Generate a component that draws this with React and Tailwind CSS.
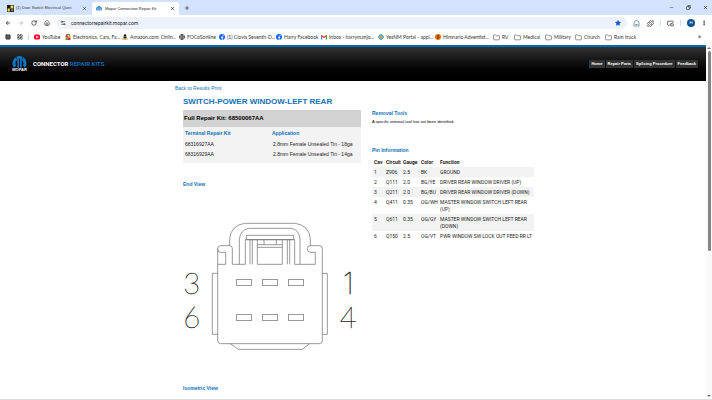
import React from 'react';
import {
    ArrowLeft, ArrowRight, RotateCw, House, Settings2, Star, Puzzle, EllipsisVertical,
    Folder, LayoutGrid, Minus, Copy, X, Plus, Globe, PictureInPicture2, Square,
} from 'lucide-react';

const bookmarks = [
    { label: 'YouTube', icon: 'youtube', width: 'w-[31px]' },
    { label: 'Electronics, Cars, Fa...', icon: 'ebay', width: 'w-[57px]' },
    { label: 'Amazon.com: Onlin...', icon: 'amazon', width: 'w-[57px]' },
    { label: 'FOCoSonline', icon: 'globe', width: 'w-[40px]' },
    { label: '(1) Clovis Seventh-D...', icon: 'facebook', width: 'w-[57px]' },
    { label: 'Harry Facebook', icon: 'facebook', width: 'w-[45px]' },
    { label: 'Inbox - harrymanjo...', icon: 'gmail', width: 'w-[57px]' },
    { label: 'YesNM Portal - appl...', icon: 'portal', width: 'w-[57px]' },
    { label: 'Himnario Adventist...', icon: 'himnario', width: 'w-[58px]' },
    { label: 'RV', icon: 'folder', width: 'w-[21px]' },
    { label: 'Medical', icon: 'folder', width: 'w-[31px]' },
    { label: 'Military', icon: 'folder', width: 'w-[30px]' },
    { label: 'Church', icon: 'folder', width: 'w-[30px]' },
    { label: 'Ram truck', icon: 'folder', width: 'w-[34px]' },
];

const kits = [
    { part: '68316927AA', application: '2.8mm Female Unsealed Tin - 18ga' },
    { part: '68316929AA', application: '2.8mm Female Unsealed Tin - 14ga' },
];

const pins = [
    { cav: 1, circuit: 'Z906', gauge: '2.5', color: 'BK', fn: 'GROUND' },
    { cav: 2, circuit: 'Q111', gauge: '2.0', color: 'BG/YE', fn: 'DRIVER REAR WINDOW DRIVER (UP)' },
    { cav: 3, circuit: 'Q211', gauge: '2.0', color: 'BG/BU', fn: 'DRIVER REAR WINDOW DRIVER (DOWN)' },
    { cav: 4, circuit: 'Q411', gauge: '0.35', color: 'OG/WH', fn: 'MASTER WINDOW SWITCH LEFT REAR (UP)' },
    { cav: 5, circuit: 'Q611', gauge: '0.35', color: 'OG/GY', fn: 'MASTER WINDOW SWITCH LEFT REAR (DOWN)' },
    { cav: 6, circuit: 'Q150', gauge: '2.5', color: 'OG/VT', fn: 'PWR WINDOW SW LOCK OUT FEED RR LT' },
];

const BookmarkIcon = ({ name }) => {
    if (name === 'folder') return <Folder className="size-[7px] shrink-0 text-[#474747]" />;
    if (name === 'globe') return <Globe className="size-[6px] shrink-0 text-[#333]" strokeWidth={3} />;
    return (
        <svg viewBox="0 0 12 12" className="size-[6px] shrink-0">
            {name === 'youtube' && (
                <>
                    <rect y="1" width="12" height="10" rx="3" fill="#f03" />
                    <path d="M4.5 3.5v5L9 6z" fill="#fff" />
                </>
            )}
            {name === 'ebay' && (
                <>
                    <path d="M3 4V1h6v3" fill="none" stroke="#444" strokeWidth="1.5" />
                    <path d="M1 3h5v4H1z" fill="#e53238" />
                    <path d="M6 3h5v4H6z" fill="#f5af02" />
                    <path d="M1 7h5v5H1z" fill="#7a9b20" />
                    <path d="M6 7h5v5H6z" fill="#c22d6e" />
                </>
            )}
            {name === 'amazon' && (
                <>
                    <circle cx="6" cy="3" r="2.5" fill="#222" />
                    <path d="M3 5h6v4H3z" fill="#222" />
                    <path d="M0 8q6 5 12 0v2q-6 4-12 0z" fill="#f90" />
                </>
            )}
            {name === 'facebook' && (
                <>
                    <circle cx="6" cy="6" r="6" fill="#1068f0" />
                    <path d="M6.5 12V5q0-2 2.500-2M4 7h4.500" fill="none" stroke="#fff" strokeWidth="1.6" />
                </>
            )}
            {name === 'gmail' && (
                <>
                    <path d="M1.200 11V2" stroke="#4285f4" strokeWidth="2.400" />
                    <path d="M10.800 11V2" stroke="#34a853" strokeWidth="2.400" />
                    <path d="M1 3l5 4 5-4" fill="none" stroke="#ea4335" strokeWidth="2.400" />
                </>
            )}
            {name === 'portal' && (
                <>
                    <circle cx="6" cy="6" r="4.500" fill="#f3d9a0" stroke="#2a9aa8" strokeWidth="2" />
                    <path d="M6 0v12M0 6h12" stroke="#4a8fa0" strokeWidth="1.5" />
                    <circle cx="6" cy="6" r="2" fill="#e7a13d" />
                </>
            )}
            {name === 'himnario' && (
                <>
                    <circle cx="6" cy="6" r="6" fill="#e8740c" />
                    <path d="M8.500 3q-4-1-4 1.500T8 6.500 4 9" fill="none" stroke="#5a2200" strokeWidth="1.5" />
                </>
            )}
        </svg>
    );
};

const MoparMark = ({ className }) => (
    <svg viewBox="0 0 44 34" className={className} fill="none" stroke="#0a76c4">
        <path d="M9 31A17 17 0 0 1 13 7" strokeWidth="9" />
        <path d="M35 31A17 17 0 0 0 31 7" strokeWidth="9" />
        <path d="M14 5q8-4 16 0" strokeWidth="7" />
        <path d="M18 5v28M26 5v28" strokeWidth="5" />
    </svg>
);

const BrowserChrome = () => (
    <div className="font-[Lato,sans-serif] text-[5px] leading-[8px] text-[#333]">
        <div className="flex h-[15px] items-end bg-[#d3e3fd]">
            <div className="flex h-[14px] w-[92px] shrink-0 items-center gap-[2px] pl-[7px] pr-[5px]">
                <svg viewBox="0 0 12 12" className="size-[7px] shrink-0">
                    <path d="M0 0h12v12H0z" fill="#1b1b1b" />
                    <path d="M6 1h5v5H6zM1 6h4v5H1z" fill="#f1d64a" />
                    <path d="M7 7h4v4H7z" fill="#777" />
                </svg>
                <span className="min-w-0 flex-1 whitespace-nowrap font-['Liberation_Sans',Arial,sans-serif] text-[4px]">(1) Door Switch Electrical Ques</span>
                <button aria-label="Close tab"><X className="size-[5px]" strokeWidth={3} /></button>
            </div>
            <div className="flex h-[13px] w-[87px] shrink-0 items-center gap-[3px] rounded-t-[3px] bg-white px-[4px] text-[#222]">
                <MoparMark className="h-[5px] w-[6px] shrink-0" />
                <span className="min-w-0 flex-1 whitespace-nowrap font-['Liberation_Sans',Arial,sans-serif] text-[4px]">Mopar Connection Repair Kit</span>
                <button aria-label="Close tab"><X className="size-[5px]" strokeWidth={3} /></button>
            </div>
            <button aria-label="New tab" className="mb-[4px] ml-[5px]"><Plus className="size-[6px]" strokeWidth={2.5} /></button>
            <div className="ml-auto mb-[5px] flex items-center gap-[12px] pr-[4px] text-[#222]">
                <button aria-label="Minimize"><Minus className="size-[5px]" /></button>
                <button aria-label="Restore"><Copy className="size-[5px] -scale-x-100" strokeWidth={3} /></button>
                <button aria-label="Close"><X className="size-[5px]" strokeWidth={3} /></button>
            </div>
        </div>

        <div className="flex h-[16px] items-center bg-white px-[5px] text-[#333]">
            <div className="flex items-center gap-[7px]">
                <button aria-label="Back"><ArrowLeft className="size-[6px]" strokeWidth={3} /></button>
                <button aria-label="Forward"><ArrowRight className="size-[6px] text-[#999]" /></button>
                <button aria-label="Reload"><RotateCw className="size-[6px]" strokeWidth={3} /></button>
                <button aria-label="Home"><House className="size-[6px]" strokeWidth={2.5} /></button>
            </div>
            <div className="ml-[7px] flex h-[12px] flex-1 items-center rounded-full bg-[#ecf1fa] pl-[2px] pr-[6px]">
                <span className="flex size-[8px] items-center justify-center rounded-full bg-white">
                    <Settings2 className="size-[6px]" strokeWidth={2.5} />
                </span>
                <input
                    aria-label="Address"
                    defaultValue="connectorrepairkit.mopar.com"
                    className="ml-[4px] h-[8px] min-w-0 flex-1 bg-transparent p-0 font-[Roboto,sans-serif] text-[5px] text-[#222] outline-none"
                />
                <button aria-label="Bookmark"><Star className="size-[6px] fill-[#0b57d0] text-[#0b57d0]" /></button>
            </div>
            <div className="ml-[6px] flex items-center">
                <button aria-label="Assistant">
                    <svg viewBox="0 0 14 14" className="size-[7px]" fill="none">
                        <path d="M2 12V6a5 5 0 0 1 10 0v6z" stroke="#6f9fc4" strokeWidth="2" />
                        <path d="M5 9h4" stroke="#e0523f" strokeWidth="2" />
                    </svg>
                </button>
                <button aria-label="Extensions" className="ml-[7px]"><Puzzle className="size-[7px]" strokeWidth={2.5} /></button>
                <span className="ml-[6px] h-[6px] w-px bg-[#c9dcfa]" />
                <button aria-label="Picture in picture" className="ml-[6px]"><PictureInPicture2 className="size-[7px]" strokeWidth={2.5} /></button>
                <span className="ml-[6px] h-[6px] w-px bg-[#c9dcfa]" />
                <button aria-label="Profile" className="ml-[6px] flex size-[8px] items-center justify-center rounded-full bg-[#0b5394] text-[4px] leading-[8px] text-white">H</button>
                <button aria-label="Menu" className="ml-[6px]"><EllipsisVertical className="size-[6px]" strokeWidth={3} /></button>
            </div>
        </div>

        <nav className="flex h-[14px] items-center bg-white pb-[2px] pl-[5px] pr-[11px]">
            <Square className="size-[6px] shrink-0 fill-[#555]" />
            <LayoutGrid className="ml-[6px] size-[6px] shrink-0" strokeWidth={2.5} />
            <span className="ml-[5px] mr-[5px] h-[6px] w-px shrink-0 bg-[#c9dcfa]" />
            {bookmarks.map((item) => (
                <a key={item.label} href="#bookmark" className={`flex shrink-0 items-center gap-[2px] whitespace-nowrap ${item.width}`}>
                    <BookmarkIcon name={item.icon} />
                    {item.label}
                </a>
            ))}
            <button aria-label="More bookmarks" className="ml-auto font-[Roboto,sans-serif] text-[7px]">»</button>
        </nav>
    </div>
);

const SiteHeader = () => (
    <header className="flex h-[36px] items-center border-t-2 border-[#0868b0] bg-linear-to-b from-[#333] to-black pl-[12px] pr-[8px]">
        <div className="flex flex-col items-center">
            <MoparMark className="h-[12px] w-[15px]" />
            <span className="text-[4px] font-bold leading-[4px] text-white">MOPAR</span>
        </div>
        <span className="ml-[6px] font-[Roboto,sans-serif] text-[6px] font-bold leading-[8px] text-white">
            CONNECTOR <span className="text-[#0a6ab4]">REPAIR KITS</span>
        </span>
        <nav className="ml-auto flex gap-px text-[4px] font-bold leading-[8px] text-white">
            {['Home', 'Repair Parts', 'Splicing Procedure', 'Feedback'].map((label) => (
                <a key={label} href="#nav" className="bg-[#333] px-[2px]">{label}</a>
            ))}
        </nav>
    </header>
);

const slots = [[199, 209], [277, 209], [355, 209], [199, 314], [277, 314], [355, 314]];

const EndView = () => (
    <svg viewBox="39 30 525 396" className="block w-[175px]" fill="none" stroke="#666" strokeWidth="2">
        <path d="M179 107V86q4-40 45-46H376q41 6 45 46V107" />
        <path d="M208 163V86q5-27 28-31H364q23 4 26 31V163" />
        <path d="M229 76H371V89H229Z" />
        <path d="M226 163V89H374V163M240 90V163M247 90V163M262 90V163H337V90M352 90V163M359 90V163" />
        <path d="M262 104H337M262 112H337M282 90V104M319 90V104" />
        <path d="M187 163V116q0-9-8-9H152q-9 0-9 9 0 11 9 11H167V163H143M143 116V391q0 10 9 10H448q9 0 9-10V116q0-9-9-9H421q-9 0-9 9 0 11 9 11H436V163H374M187 163H226" />
        <path d="M143 190H127V373H143M457 190H472V373H457" />
        <path d="M181 401L205 418H397L419 401" />
        {slots.map(([x, y]) => (
            <rect key={`${x}-${y}`} x={x} y={y} width="46" height="17" />
        ))}
        <g className="font-[Lato,sans-serif] text-[88px] font-thin" fill="#222" stroke="#222" strokeWidth="1" textAnchor="middle">
            <text x="65" y="251">3</text>
            <text x="65" y="354">6</text>
            <text x="535" y="251" className="font-[Inter,sans-serif]">1</text>
            <text x="535" y="354">4</text>
        </g>
    </svg>
);

const SectionTitle = ({ children, className = '' }) => (
    <h2 className={`text-[5px] font-bold leading-[8px] text-[#1272b8] ${className}`}>{children}</h2>
);

const App = () => {
    return (
        <div className="flex h-screen flex-col overflow-hidden bg-white font-['Liberation_Sans',Arial,sans-serif] text-[#222]">
            <BrowserChrome />
            <div className="flex min-h-0 flex-1 border-b border-[#ddd]">
                <div className="min-w-0 flex-1 overflow-hidden">
                    <SiteHeader />
                    <main className="mx-auto w-full max-w-[362px] pl-[3px] pt-[3px]">
                        <div className="text-[5px] leading-[8px] text-[#1272b8]">
                            <a href="#results">Back to Results</a> <a href="#print">Print</a>
                        </div>
                        <div className="flex gap-[11px] pl-[8px]">
                            <div className="w-[178px] shrink-0">
                                <h1 className="mt-[4px] whitespace-nowrap text-[8px] font-bold leading-[12px] text-[#1272b8]">SWITCH-POWER WINDOW-LEFT REAR</h1>
                                <div className="mt-[2px] bg-[#d2d2d2] px-px text-[6px] font-bold leading-[17px] text-black">Full Repair Kit: 68500067AA</div>
                                <div className="bg-[#f3f3f3] pb-[4px] pl-[2px] pt-px">
                                    <table className="w-full text-left text-[5px] leading-[10px]">
                                        <thead className="leading-[11px] text-[#1272b8]">
                                            <tr>
                                                <th className="w-[87px] p-0">Terminal Repair Kit</th>
                                                <th className="p-0">Application</th>
                                            </tr>
                                        </thead>
                                        <tbody>
                                            {kits.map((kit) => (
                                                <tr key={kit.part}>
                                                    <td className="p-0">{kit.part}</td>
                                                    <td className="whitespace-nowrap p-0 pl-px">{kit.application}</td>
                                                </tr>
                                            ))}
                                        </tbody>
                                    </table>
                                </div>
                                <SectionTitle className="mt-[17px]">End View</SectionTitle>
                                <div className="pt-[32px]">
                                    <EndView />
                                </div>
                                <SectionTitle className="mt-[32px]">Isometric View</SectionTitle>
                            </div>

                            <div className="min-w-0 flex-1 pt-[17px]">
                                <SectionTitle>Removal Tools</SectionTitle>
                                <p className="mt-px text-[4px] leading-[8px] text-black">A specific removal tool has not been identified.</p>
                                <SectionTitle className="mt-[20px]">Pin Information</SectionTitle>
                                <table className="mt-[3px] w-full text-left font-[Roboto,sans-serif] text-[5px] leading-[7px]">
                                    <thead>
                                        <tr>
                                            <th className="w-[14px] pb-px pl-[2px] pt-[2px]">Cav</th>
                                            <th className="w-[17px] pb-px pt-[2px]">Circuit</th>
                                            <th className="w-[18px] pb-px pt-[2px]">Gauge</th>
                                            <th className="w-[19px] pb-px pt-[2px]">Color</th>
                                            <th className="pb-px pt-[2px]">Function</th>
                                        </tr>
                                    </thead>
                                    <tbody>
                                        {pins.map((pin) => (
                                            <tr key={pin.cav} className="align-top odd:bg-[#f3f3f3]">
                                                <td className="pb-px pl-[2px] pt-[2px]">{pin.cav}</td>
                                                <td className="pb-px pt-[2px]">{pin.circuit}</td>
                                                <td className="pb-px pt-[2px]">{pin.gauge}</td>
                                                <td className="pb-px pt-[2px]">{pin.color}</td>
                                                <td className="pb-px pt-[2px]">{pin.fn}</td>
                                            </tr>
                                        ))}
                                    </tbody>
                                </table>
                            </div>
                        </div>
                    </main>
                </div>
                {/* Scrollbar */}
                <div className="flex w-[6px] shrink-0 flex-col items-center bg-[#fafafa] py-[2px]">
                    <span className="border-x-2 border-b-2 border-x-transparent border-b-[#777]" />
                    <span className="mt-[2px] h-[57%] w-[3px] rounded-full bg-[#858585]" />
                    <span className="mt-auto border-x-2 border-t-2 border-x-transparent border-t-[#777]" />
                </div>
            </div>
        </div>
    );
};

export default App;
